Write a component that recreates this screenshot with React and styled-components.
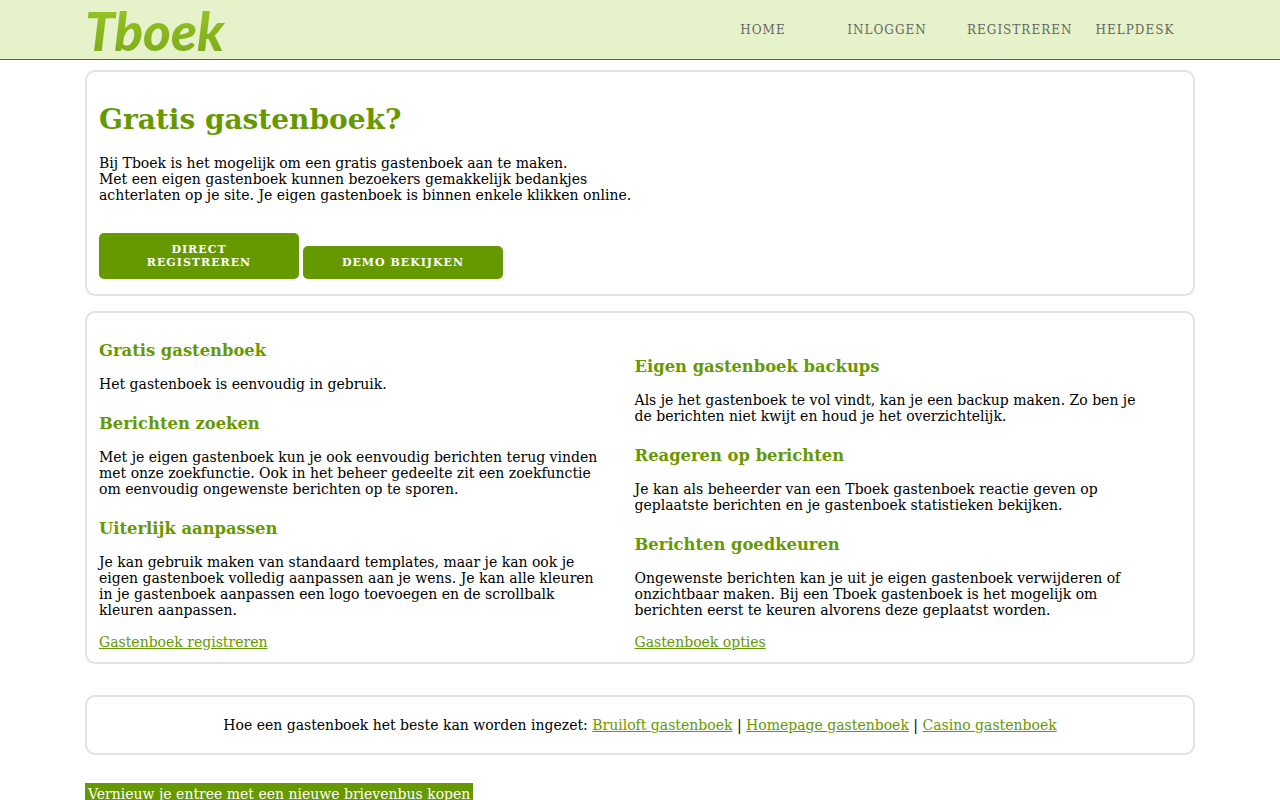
import React from 'react';
import styled, { createGlobalStyle } from 'styled-components';

const GlobalStyle = createGlobalStyle`
  body {
    margin: 0;
    background-color: #fff;
    color: #000;
    font-family: 'DejaVu Serif', serif;
    font-size: 14px;
    line-height: 16px;
  }
`;

const Header = styled.header`
  background-color: #e6f2ca;
  border-bottom: 1px solid #228b22;
`;

const Container = styled.div`
  max-width: 1110px;
  margin: 0 auto;
`;

const HeaderBar = styled(Container)`
  display: flex;
  align-items: center;
  justify-content: space-between;
  min-height: 59px;
`;

const Logo = styled.a`
  padding: 2px 8px 0 0;
  font-family: Lato, sans-serif;
  font-size: 53px;
  font-weight: 900;
  font-style: italic;
  line-height: 57px;
  text-decoration: none;
  color: transparent;
  background: linear-gradient(#94c122 20%, #80ae1c 85%);
  background-clip: text;
`;

const Menu = styled.nav`
  display: flex;
  gap: 4px;
`;

const MenuLink = styled.a`
  box-sizing: border-box;
  width: 120px;
  padding: 0 16px;
  color: #666;
  font-size: 12px;
  letter-spacing: 1px;
  text-align: center;
  text-decoration: none;
  text-transform: uppercase;
`;

const Card = styled.section`
  border: 2px solid #e2e2e2;
  border-radius: 10px;
  padding: 12px;
  margin: ${(props) => props.$margin || '0'};
`;

const Title = styled.h1`
  margin: 19px 0;
  color: #690;
  font-size: 28px;
  line-height: 33px;
`;

const Intro = styled.p`
  max-width: 540px;
  margin: 0 0 30px;
`;

const Buttons = styled.div`
  display: flex;
  flex-wrap: wrap;
  align-items: flex-end;
  gap: 4px;
  padding-bottom: 3px;
`;

const Button = styled.button`
  width: 200px;
  padding: 10px 20px;
  border: 0;
  border-radius: 5px;
  background-color: #690;
  color: #fff;
  font-family: inherit;
  font-size: 11px;
  font-weight: 700;
  line-height: 13px;
  letter-spacing: 1px;
  text-transform: uppercase;
  cursor: pointer;
`;

const Columns = styled.div`
  display: grid;
  grid-template-columns: 47% 47%;
  column-gap: 27px;
  align-items: end;
`;

const Subtitle = styled.h3`
  margin: 22px 0 16px;
  color: #690;
  line-height: 19px;

  &:first-child {
    margin-top: 16px;
  }
`;

const Text = styled.p`
  margin: 0;
`;

const Link = styled.a`
  color: #690;
`;

const MoreLink = styled(Link)`
  display: inline-block;
  margin-top: 16px;
`;

const CenterCard = styled(Card)`
  padding: 20px 12px;
  text-align: center;
`;

const PartnerLink = styled.a`
  display: inline-block;
  padding: 3px;
  background-color: #690;
  color: #fff;
  text-decoration: none;
`;

const menu = ['Home', 'Inloggen', 'Registreren', 'Helpdesk'];

const leftColumn = [
  {
    title: 'Gratis gastenboek',
    text: 'Het gastenboek is eenvoudig in gebruik.',
  },
  {
    title: 'Berichten zoeken',
    text: 'Met je eigen gastenboek kun je ook eenvoudig berichten terug vinden met onze zoekfunctie. Ook in het beheer gedeelte zit een zoekfunctie om eenvoudig ongewenste berichten op te sporen.',
  },
  {
    title: 'Uiterlijk aanpassen',
    text: 'Je kan gebruik maken van standaard templates, maar je kan ook je eigen gastenboek volledig aanpassen aan je wens. Je kan alle kleuren in je gastenboek aanpassen een logo toevoegen en de scrollbalk kleuren aanpassen.',
  },
];

const rightColumn = [
  {
    title: 'Eigen gastenboek backups',
    text: 'Als je het gastenboek te vol vindt, kan je een backup maken. Zo ben je de berichten niet kwijt en houd je het overzichtelijk.',
  },
  {
    title: 'Reageren op berichten',
    text: 'Je kan als beheerder van een Tboek gastenboek reactie geven op geplaatste berichten en je gastenboek statistieken bekijken.',
  },
  {
    title: 'Berichten goedkeuren',
    text: 'Ongewenste berichten kan je uit je eigen gastenboek verwijderen of onzichtbaar maken. Bij een Tboek gastenboek is het mogelijk om berichten eerst te keuren alvorens deze geplaatst worden.',
  },
];

const Column = ({ items, link }) => (
  <div>
    {items.map((item) => (
      <React.Fragment key={item.title}>
        <Subtitle>{item.title}</Subtitle>
        <Text>{item.text}</Text>
      </React.Fragment>
    ))}
    <MoreLink href="#">{link}</MoreLink>
  </div>
);

const App = () => {
  return (
    <>
      <GlobalStyle />
      <Header>
        <HeaderBar>
          <Logo href="#">Tboek</Logo>
          <Menu>
            {menu.map((item) => (
              <MenuLink key={item} href="#">{item}</MenuLink>
            ))}
          </Menu>
        </HeaderBar>
      </Header>

      <Container as="main">
        <Card $margin="10px 0 15px">
          <Title>Gratis gastenboek?</Title>
          <Intro>
            Bij Tboek is het mogelijk om een gratis gastenboek aan te maken.
            <br />
            Met een eigen gastenboek kunnen bezoekers gemakkelijk bedankjes
            <br />
            achterlaten op je site. Je eigen gastenboek is binnen enkele klikken online.
          </Intro>
          <Buttons>
            <Button type="button">Direct registreren</Button>
            <Button type="button">Demo bekijken</Button>
          </Buttons>
        </Card>

        <Card $margin="0 0 31px">
          <Columns>
            <Column items={leftColumn} link="Gastenboek registreren" />
            <Column items={rightColumn} link="Gastenboek opties" />
          </Columns>
        </Card>

        <CenterCard $margin="0 0 28px">
          Hoe een gastenboek het beste kan worden ingezet:{' '}
          <Link href="#">Bruiloft gastenboek</Link> |{' '}
          <Link href="#">Homepage gastenboek</Link> |{' '}
          <Link href="#">Casino gastenboek</Link>
        </CenterCard>

        <PartnerLink href="#">Vernieuw je entree met een nieuwe brievenbus kopen</PartnerLink>
      </Container>
    </>
  );
};

export default App;
